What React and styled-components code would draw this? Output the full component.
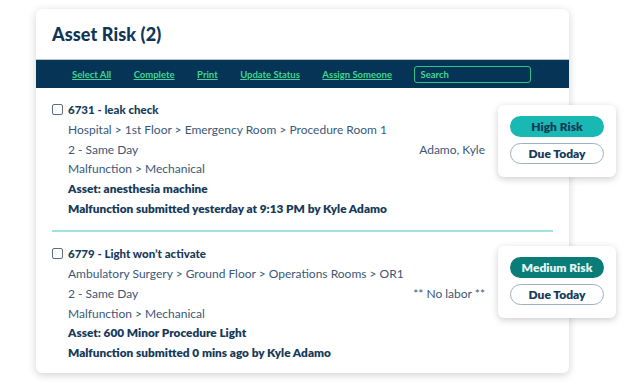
import styled, { createGlobalStyle } from "styled-components";

const GlobalStyle = createGlobalStyle`
  html, body {
    margin: 0;
    padding: 0;
    background: #ffffff;
  }
  body {
    font-family: "Lato", "Liberation Sans", sans-serif;
    color: #163a5a;
  }
`;

const Page = styled.div`
  width: 640px;
  height: 384px;
  padding: 9px 0 0 36px;
  box-sizing: border-box;
`;

const Card = styled.div`
  width: 533px;
  height: 364px;
  background: #fff;
  border-radius: 6px;
  box-shadow: 0 2px 8px rgba(0, 0, 0, 0.18);
  display: flex;
  flex-direction: column;
`;

const Header = styled.div`
  height: 50px;
  display: flex;
  align-items: center;
  padding-left: 16px;
`;

const Title = styled.h1`
  margin: 0;
  font-size: 18px;
  font-weight: 900;
  color: #0f3657;
  letter-spacing: 0.1px;
`;

const Toolbar = styled.div`
  height: 29px;
  background: #053457;
  display: flex;
  align-items: center;
  padding-left: 36px;
  gap: 22.5px;
  border-top: 1px solid #b8c4ce;
  box-sizing: border-box;
`;

const ToolLink = styled.a`
  font-size: 9.5px;
  font-weight: 700;
  color: #3ed88f;
  text-decoration: underline;
  text-underline-offset: 1px;
  cursor: pointer;
`;

const SearchInput = styled.input`
  width: 117px;
  height: 17px;
  box-sizing: border-box;
  border: 1px solid #2ec485;
  border-radius: 3px;
  background: transparent;
  color: #3ed88f;
  font-family: inherit;
  font-size: 9.5px;
  font-weight: 700;
  padding: 0 5px;
  outline: none;
  &::placeholder {
    color: #3ed88f;
  }
`;

const Item = styled.div`
  position: relative;
  padding: ${(p) => p.$pad};
  padding-left: 16px;
  padding-right: 84px;
`;

const Row = styled.div`
  height: 19.7px;
  display: flex;
  align-items: center;
  justify-content: space-between;
  padding-left: ${(p) => (p.$indent ? "16px" : "0")};
  font-size: ${(p) => (p.$bold ? "11.8px" : "12px")};
  font-weight: ${(p) => (p.$bold ? 800 : 400)};
  color: ${(p) => (p.$bold ? "#163a5a" : "#3b5878")};
  white-space: nowrap;
`;

const TitleRow = styled(Row)`
  justify-content: flex-start;
  gap: 5px;
  font-size: 11.5px;
  font-weight: 900;
  color: #163a5a;
`;

const Check = styled.span`
  width: 9px;
  height: 9px;
  border: 1.3px solid #5b6d80;
  border-radius: 2px;
  display: inline-block;
`;

const Divider = styled.div`
  height: 2px;
  margin: 0 16px;
  background: #9fe3df;
`;

const BadgeCard = styled.div`
  position: absolute;
  top: ${(p) => p.$top}px;
  right: -47px;
  width: 118px;
  height: 72px;
  box-sizing: border-box;
  padding: 11px 12px 0;
  background: #fff;
  border-radius: 6px;
  box-shadow: 0 2px 7px rgba(0, 0, 0, 0.2);
  display: flex;
  flex-direction: column;
  gap: 6px;
`;

const Badge = styled.div`
  height: 21px;
  border-radius: 11px;
  box-sizing: border-box;
  display: flex;
  align-items: center;
  justify-content: center;
  font-size: 12px;
  font-weight: 800;
  background: ${(p) => p.$bg || "#fff"};
  color: ${(p) => p.$color || "#163a5a"};
  border: ${(p) => (p.$outline ? "1px solid #9fb0c0" : "none")};
`;

const items = [
  {
    title: "6731 - leak check",
    path: "Hospital > 1st Floor > Emergency Room > Procedure Room 1",
    who: "Adamo, Kyle",
    asset: "Asset: anesthesia machine",
    note: "Malfunction submitted yesterday at 9:13 PM by Kyle Adamo",
    risk: "High Risk",
    riskBg: "#1ab8b3",
    riskColor: "#163a5a",
    pad: "12px 0 12px",
    top: 17,
  },
  {
    title: "6779 - Light won’t activate",
    path: "Ambulatory Surgery > Ground Floor > Operations Rooms > OR1",
    who: "** No labor **",
    asset: "Asset: 600 Minor Procedure Light",
    note: "Malfunction submitted 0 mins ago by Kyle Adamo",
    risk: "Medium Risk",
    riskBg: "#0b7d78",
    riskColor: "#e6f6f4",
    pad: "12px 0 9px",
    top: 14,
  },
];

function App() {
  return (
    <Page>
      <GlobalStyle />
      <Card>
        <Header>
          <Title>Asset Risk (2)</Title>
        </Header>
        <Toolbar>
          <ToolLink>Select All</ToolLink>
          <ToolLink>Complete</ToolLink>
          <ToolLink>Print</ToolLink>
          <ToolLink>Update Status</ToolLink>
          <ToolLink>Assign Someone</ToolLink>
          <SearchInput placeholder="Search" />
        </Toolbar>
        {items.map((item, i) => (
          <div key={item.title}>
            {i > 0 && <Divider />}
            <Item $pad={item.pad}>
              <TitleRow>
                <Check />
                {item.title}
              </TitleRow>
              <Row $indent>{item.path}</Row>
              <Row $indent>
                <span>2 - Same Day</span>
                <span>{item.who}</span>
              </Row>
              <Row $indent>Malfunction &gt; Mechanical</Row>
              <Row $indent $bold>{item.asset}</Row>
              <Row $indent $bold>{item.note}</Row>
              <BadgeCard $top={item.top}>
                <Badge $bg={item.riskBg} $color={item.riskColor}>
                  {item.risk}
                </Badge>
                <Badge $outline>Due Today</Badge>
              </BadgeCard>
            </Item>
          </div>
        ))}
      </Card>
    </Page>
  );
}

export default App;
